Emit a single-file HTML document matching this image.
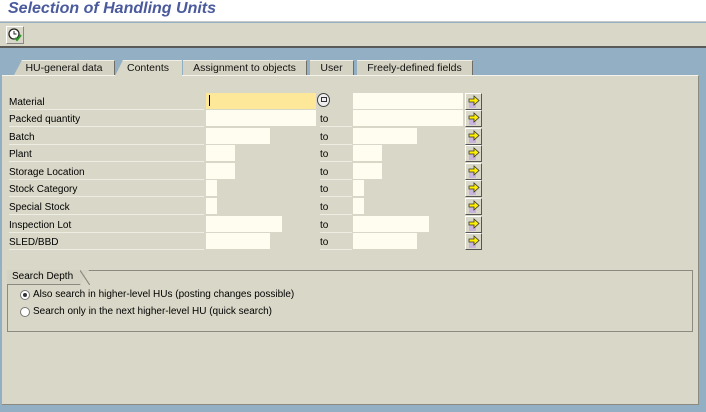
<!DOCTYPE html>
<html><head><meta charset="utf-8"><style>
*{margin:0;padding:0;box-sizing:border-box}
body{width:706px;height:412px;overflow:hidden;background:#93afc3;font-family:"Liberation Sans",Arial,sans-serif;font-size:10px;color:#000;position:relative}
.a{position:absolute}
.title{left:0;top:0;width:706px;height:22px;background:#fff;border-bottom:1px solid #c8c8c8}
.title span{position:absolute;left:8px;top:0px;font-size:16px;font-weight:bold;font-style:italic;color:#4a5a9c}
.tb{left:0;top:23px;width:706px;height:25px;background:#d9d7c7;border-bottom:2px solid #5a5a58}
.panel{left:2px;top:75px;width:697px;height:330px;background:#d9d7c7;border-top:1px solid #f4f3ec;border-right:1px solid #8a8a80;border-bottom:1px solid #8a8a80}
.tab{top:60px;height:15px;background:#d4d2c2;border-top:1px solid #f0efe6;border-right:1px solid #6e6e66;font-size:10.5px;line-height:14px;text-align:center;color:#111}
.tab.act{background:#d9d7c7;height:16px;border-right:1px solid #d9d7c7}
.lbl{left:9px;width:195px;font-size:10px;height:17px;line-height:16px;padding-top:2px;border-bottom:1px solid #eeede4}
.to{left:320px;width:32px;height:17px;line-height:16px;padding-top:2px;border-bottom:1px solid #eeede4}
.f{height:16px;background:#fefdf0}
.btn{left:465px;width:17px;height:17px;background:#d9d7c7;border:1px solid;border-color:#fff #555 #555 #fff}
.grp{left:7px;top:270px;width:686px;height:62px;border:1px solid #8a8a80}
.radio{width:10px;height:10px;border-radius:50%;background:#fff;border:1px solid #777}
</style></head><body>
<div class="a title"><span>Selection of Handling Units</span></div>
<div class="a tb">
 <div class="a" style="left:6px;top:3px;width:18px;height:18px;border:1px solid;border-color:#fff #888 #888 #fff">
 <svg width="16" height="16" viewBox="0 0 16 16" style="position:absolute;left:0;top:0"><circle cx="7" cy="7" r="5" fill="#fff" stroke="#222" stroke-width="1.3"/><path d="M7 4v3h2.5" stroke="#222" fill="none"/><path d="M8 11l2 2 4-5" stroke="#2a9a2a" stroke-width="2" fill="none"/></svg></div>
</div>
<div class="a tab" style="left:14px;width:101px;clip-path:polygon(8px 0,100% 0,100% 100%,0 100%)">HU-general data</div>
<div class="a tab" style="left:183px;width:124px">Assignment to objects</div>
<div class="a tab" style="left:310px;width:44px">User</div>
<div class="a tab" style="left:357px;width:116px">Freely-defined fields</div>
<div class="a panel"></div>
<div class="a tab act" style="left:115px;width:67px;clip-path:polygon(8px 0,100% 0,100% 100%,0 100%)">Contents</div>

<div class="a lbl" style="top:93px">Material</div>
<div class="a lbl" style="top:110px">Packed quantity</div>
<div class="a lbl" style="top:128px">Batch</div>
<div class="a lbl" style="top:145px">Plant</div>
<div class="a lbl" style="top:163px">Storage Location</div>
<div class="a lbl" style="top:180px">Stock Category</div>
<div class="a lbl" style="top:198px">Special Stock</div>
<div class="a lbl" style="top:216px">Inspection Lot</div>
<div class="a lbl" style="top:233px">SLED/BBD</div>

<div class="a f" style="left:206px;top:93px;width:110px;background:#fde89a"><div class="a" style="left:3px;top:2px;width:1px;height:11px;background:#000"></div></div>
<div class="a" style="left:317px;top:93px;width:13px;height:14px;border-radius:50%;background:#eee;border:1px solid #444"><div class="a" style="left:3px;top:3px;width:6px;height:5px;border:1px solid #333"></div></div>
<div class="a to" style="top:110px">to</div>
<div class="a to" style="top:128px">to</div>
<div class="a to" style="top:145px">to</div>
<div class="a to" style="top:163px">to</div>
<div class="a to" style="top:180px">to</div>
<div class="a to" style="top:198px">to</div>
<div class="a to" style="top:216px">to</div>
<div class="a to" style="top:233px">to</div>

<div class="a f" style="left:206px;top:110px;width:110px"></div>
<div class="a f" style="left:206px;top:128px;width:64px"></div>
<div class="a f" style="left:206px;top:145px;width:29px"></div>
<div class="a f" style="left:206px;top:163px;width:29px"></div>
<div class="a f" style="left:206px;top:180px;width:11px"></div>
<div class="a f" style="left:206px;top:198px;width:11px"></div>
<div class="a f" style="left:206px;top:216px;width:76px"></div>
<div class="a f" style="left:206px;top:233px;width:64px"></div>

<div class="a f" style="left:353px;top:93px;width:110px"></div>
<div class="a f" style="left:353px;top:110px;width:110px"></div>
<div class="a f" style="left:353px;top:128px;width:64px"></div>
<div class="a f" style="left:353px;top:145px;width:29px"></div>
<div class="a f" style="left:353px;top:163px;width:29px"></div>
<div class="a f" style="left:353px;top:180px;width:11px"></div>
<div class="a f" style="left:353px;top:198px;width:11px"></div>
<div class="a f" style="left:353px;top:216px;width:76px"></div>
<div class="a f" style="left:353px;top:233px;width:64px"></div>

<svg width="0" height="0" style="position:absolute"><defs><g id="ar"><rect x="3" y="8" width="7" height="6" fill="#c8b4dc"/><path d="M3 5h5V2l5 4.5-5 4.5V8H3z" fill="#ffee00" stroke="#333" stroke-width="0.8"/></g></defs></svg>
<div class="a btn" style="top:93px"><svg width="15" height="15"><use href="#ar"/></svg></div>
<div class="a btn" style="top:110px"><svg width="15" height="15"><use href="#ar"/></svg></div>
<div class="a btn" style="top:128px"><svg width="15" height="15"><use href="#ar"/></svg></div>
<div class="a btn" style="top:145px"><svg width="15" height="15"><use href="#ar"/></svg></div>
<div class="a btn" style="top:163px"><svg width="15" height="15"><use href="#ar"/></svg></div>
<div class="a btn" style="top:180px"><svg width="15" height="15"><use href="#ar"/></svg></div>
<div class="a btn" style="top:198px"><svg width="15" height="15"><use href="#ar"/></svg></div>
<div class="a btn" style="top:216px"><svg width="15" height="15"><use href="#ar"/></svg></div>
<div class="a btn" style="top:233px"><svg width="15" height="15"><use href="#ar"/></svg></div>

<div class="a grp"></div>
<div class="a" style="left:7px;top:270px;width:82px;height:15px;background:#d4d2c2;border-bottom:1px solid #8a8a80;clip-path:polygon(0 0,100% 0,calc(100% - 9px) 100%,0 100%);font-size:10px;line-height:14px;padding-left:5px">Search Depth</div>
<div class="a" style="left:80px;top:270px;width:10px;height:15px;background:linear-gradient(to bottom left,transparent 47%,#8a8a80 48%,#8a8a80 54%,transparent 55%)"></div>
<div class="a radio" style="left:20px;top:290px"><div class="a" style="left:2px;top:2px;width:4px;height:4px;border-radius:50%;background:#333"></div></div>
<div class="a" style="left:33px;top:289px;font-size:10px">Also search in higher-level HUs (posting changes possible)</div>
<div class="a radio" style="left:20px;top:307px"></div>
<div class="a" style="left:33px;top:306px;font-size:10px">Search only in the next higher-level HU (quick search)</div>
</body></html>
